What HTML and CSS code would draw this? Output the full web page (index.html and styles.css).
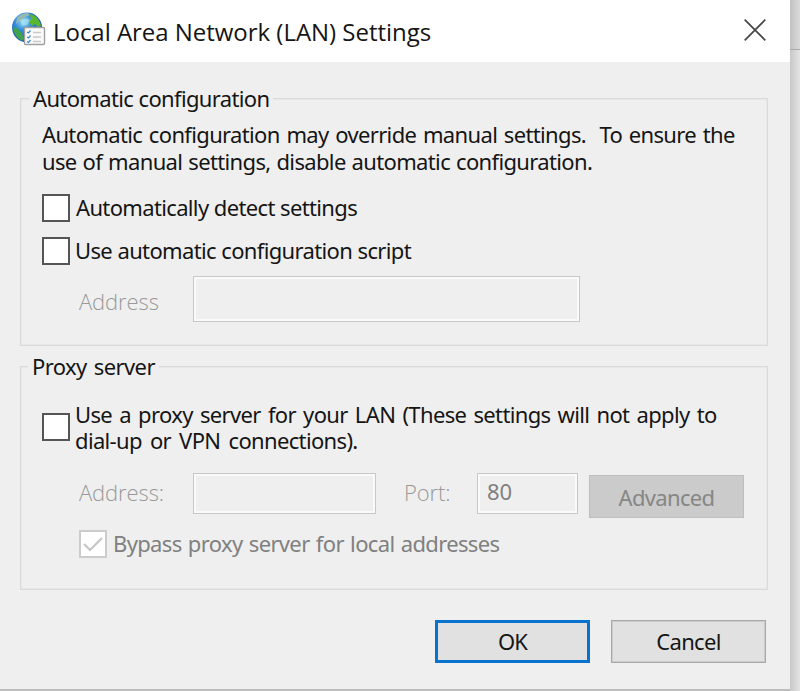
FILE: index.html
```html
<!DOCTYPE html>
<html lang="en">
<head>
<meta charset="utf-8">
<title>Local Area Network (LAN) Settings</title>
<link rel="stylesheet" href="styles.css">
</head>
<body>
<main class="dialog">
  <header class="titlebar">
    <svg class="globe" width="34" height="36" viewBox="0 0 34 36">
      <defs>
        <radialGradient id="sea" cx=".38" cy=".3" r=".75">
          <stop offset="0" stop-color="#9cdcf5"/><stop offset=".4" stop-color="#328bd6"/><stop offset="1" stop-color="#163b9b"/>
        </radialGradient>
      </defs>
      <circle cx="15" cy="15.500" r="15" fill="url(#sea)"/>
      <path d="M5 6Q9 1 16 1L18 3L13 5L10 9L6 10L4 12Z" fill="#94b8b4"/>
      <path d="M18 2Q27 4 29 14L26 15L23 12L20 14L17 10L19 7Z" fill="#5cb52f"/>
      <path d="M1 15L5 16L10 21L12 27L10 29Q2 25 1 15Z" fill="#3fa251"/>
      <path d="M8 8Q13 5 18 8L15 13L10 14Z" fill="#a4e6f5" opacity=".65"/>
      <rect x="12.500" y="15.500" width="20" height="17" rx="1" fill="#fafafa" stroke="#a0a0a0" stroke-width="1.400"/>
      <path d="M15 20l1.500 1 2-2.500M15 25l1.500 1 2-2.500M15 29.500l1.500 1 2-2.500" fill="none" stroke="#3a8bd0" stroke-width="1.300"/>
      <path d="M21 20.500h8M21 25h8M21 29.500h8" stroke="#c9c9c9" stroke-width="1.300"/>
    </svg>
    <h1 class="title">Local Area Network (LAN) Settings</h1>
    <svg class="close" width="22" height="22" viewBox="0 0 22 22"><path d="M.7.700l20.600 20.600M21.300.700L.7 21.300" stroke="#454545" stroke-width="1.700"/></svg>
  </header>
  <section class="group auto">
    <h2 class="legend"><span>Automatic configuration</span></h2>
    <p class="note"><span class="t-note1">Automatic configuration may override manual settings.&nbsp; To ensure the</span><br><span class="t-note2">use of manual settings, disable automatic configuration.</span></p>
    <div class="check detect"><i class="box"></i><span>Automatically detect settings</span></div>
    <div class="check script"><i class="box"></i><span>Use automatic configuration script</span></div>
    <div class="row script-row"><span class="label">Address</span><div class="field wide"></div></div>
  </section>
  <section class="group proxy">
    <h2 class="legend"><span class="t-proxy">Proxy server</span></h2>
    <div class="check use"><i class="box"></i><p class="lines"><span class="t-use1">Use a proxy server for your LAN (These settings will not apply to</span><br><span class="t-use2">dial-up or VPN connections).</span></p></div>
    <div class="row proxy-row"><span class="label">Address:</span><div class="field addr"></div><span class="label port-label">Port:</span><div class="field port">80</div><div class="button advanced"><span>Advanced</span></div></div>
    <div class="check bypass"><i class="box off"><svg width="22" height="18" viewBox="0 0 22 18"><path d="M2 9l6 6L20 3" fill="none" stroke="#c6c6c6" stroke-width="2.200"/></svg></i><span class="t-bypass">Bypass proxy server for local addresses</span></div>
  </section>
  <footer class="actions"><div class="button ok"><span>OK</span></div><div class="button cancel"><span>Cancel</span></div></footer>
</main>
<aside class="backdrop"><div class="backdrop-top"></div></aside>
</body>
</html>
```
FILE: styles.css
```css
* { box-sizing: border-box; margin: 0; padding: 0; }
body { width: 800px; height: 691px; overflow: hidden; display: flex; background: #bdbdbd; font: 22px/26px "Noto Sans", sans-serif; letter-spacing: -.65px; word-spacing: .3px; color: #151515; }
span { white-space: nowrap; }
.dialog { width: 790px; height: 689px; background: #efefef; }
.backdrop { width: 10px; height: 691px; background: linear-gradient(90deg, #c8c8c8, #e4e4e4); }
.backdrop-top { height: 50px; border-bottom: 1px solid #aaa; background: linear-gradient(90deg, #c2c2c2, #dadada); }
.titlebar { height: 62px; background: #fff; display: flex; align-items: flex-start; padding: 12px 24px 0 12px; }
.title { font: 400 24px/40px "Open Sans", sans-serif; letter-spacing: -.03px; word-spacing: 0; margin-left: 7px; white-space: nowrap; }
.close { margin: 7px 0 0 auto; }
.group { width: 748px; margin-left: 20px; border: 1px solid #dadada; box-shadow: inset 0 0 0 1px #e8e8e8; padding: 1px; }
.auto { height: 248px; margin-top: 36px; }
.proxy { height: 224px; margin-top: 20px; }
.legend { font-size: 22px; font-weight: 400; line-height: 26px; height: 26px; width: max-content; margin: -15px 0 0 7px; padding: 0 4px; background: #efefef; }
.proxy .legend { margin-left: 6px; }
.note { margin: 10px 0 0 20px; line-height: 27px; }
.check { display: flex; align-items: center; margin-left: 20px; height: 28px; }
.check > span { position: relative; top: -1px; }
.box { flex: none; width: 28px; height: 28px; border: 2px solid #555; background: #fff; margin-right: 6px; }
.off { border-color: #cccccc; display: grid; place-items: center; }
.detect { margin-top: 19px; }
.script { margin-top: 15px; }
.script .box, .use .box { margin-right: 5px; }
.row { display: flex; margin-left: 57px; }
.label { font-family: "Open Sans", sans-serif; font-weight: 300; color: #999; width: 114px; letter-spacing: -.1px; }
.field { border: 1px solid #c8c8c8; box-shadow: inset 0 0 0 2px #fafafa; }
.script-row { margin-top: 11px; align-items: center; }
.script-row .label { padding-top: 3px; }
.wide { width: 387px; height: 46px; }
.use { margin-top: 21px; height: 54px; }
.lines { line-height: 26px; margin-top: -1px; }
.proxy-row { margin-top: 19px; height: 46px; }
.proxy-row .label { line-height: 39px; }
.addr { width: 183px; height: 41px; }
.proxy-row .port-label { width: 73px; margin-left: 28px; }
.port { width: 101px; height: 41px; color: #808080; padding-left: 9px; line-height: 35px; letter-spacing: 0; }
.button { display: flex; align-items: center; justify-content: center; width: 155px; height: 43px; border: 1px solid #a8a8a8; box-shadow: inset 0 0 0 1px #cccccc; background: #e1e1e1; padding-bottom: 1px; }
.advanced { margin: 2px 0 0 11px; background: #cbcbcb; border-color: #bebebe; box-shadow: none; color: #868686; padding-bottom: 0; }
.bypass { margin: 11px 0 0 57px; color: #808080; }
.actions { display: flex; justify-content: flex-end; gap: 21px; padding: 30px 24px 0 0; }
.ok { border: 3px solid #0872ce; box-shadow: none; letter-spacing: -.8px; }
.t-note1 { word-spacing: 1.6px; }
.t-note2 { word-spacing: .9px; }
.t-use1 { word-spacing: 2.1px; }
.t-use2 { word-spacing: 3px; }
.t-bypass { word-spacing: 1.2px; }
.t-proxy { letter-spacing: -.6px; word-spacing: 2px; }
```
